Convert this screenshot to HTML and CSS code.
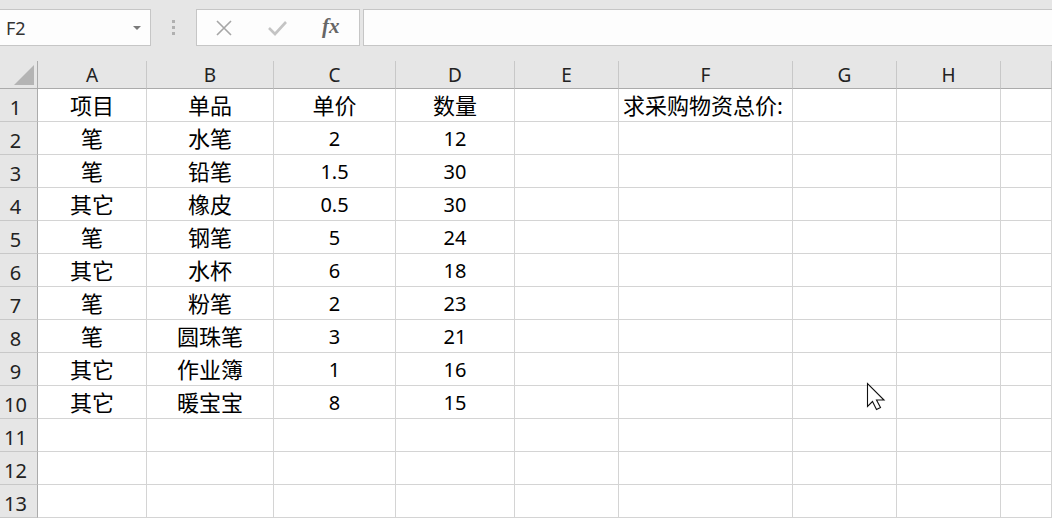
FILE: index.html
```html
<!DOCTYPE html>
<html>
<head>
<meta charset="utf-8">
<link rel="stylesheet" href="styles.css">
</head>
<body>
<div class="app">
  <div class="toolbar">
    <div class="namebox">
      <span class="name">F2</span>
      <span class="dd"></span>
    </div>
    <div class="grip"><i></i><i></i><i></i></div>
    <div class="fxbtns">
      <svg class="ico" width="22" height="22" viewBox="0 0 22 22"><path d="M4 4 L18 18 M18 4 L4 18" stroke="#a6a6a6" stroke-width="1.6" fill="none"/></svg>
      <svg class="ico" width="22" height="22" viewBox="0 0 22 22"><path d="M3 11 L9 17 L20 5" stroke="#c4c4c4" stroke-width="2.6" fill="none"/></svg>
      <span class="fx">fx</span>
    </div>
    <div class="formula"></div>
  </div>
  <div class="sheet">
    <div class="corner"><span class="tri"></span></div>
    <div class="ch">A</div><div class="ch">B</div><div class="ch">C</div><div class="ch">D</div><div class="ch">E</div><div class="ch">F</div><div class="ch">G</div><div class="ch">H</div><div class="ch"></div>

    <div class="rh">1</div><div class="c z">项目</div><div class="c z">单品</div><div class="c z">单价</div><div class="c z">数量</div><div class="c"></div><div class="c z l">求采购物资总价:</div><div class="c"></div><div class="c"></div><div class="c"></div>
    <div class="rh">2</div><div class="c z">笔</div><div class="c z">水笔</div><div class="c">2</div><div class="c">12</div><div class="c"></div><div class="c"></div><div class="c"></div><div class="c"></div><div class="c"></div>
    <div class="rh">3</div><div class="c z">笔</div><div class="c z">铅笔</div><div class="c">1.5</div><div class="c">30</div><div class="c"></div><div class="c"></div><div class="c"></div><div class="c"></div><div class="c"></div>
    <div class="rh">4</div><div class="c z">其它</div><div class="c z">橡皮</div><div class="c">0.5</div><div class="c">30</div><div class="c"></div><div class="c"></div><div class="c"></div><div class="c"></div><div class="c"></div>
    <div class="rh">5</div><div class="c z">笔</div><div class="c z">钢笔</div><div class="c">5</div><div class="c">24</div><div class="c"></div><div class="c"></div><div class="c"></div><div class="c"></div><div class="c"></div>
    <div class="rh">6</div><div class="c z">其它</div><div class="c z">水杯</div><div class="c">6</div><div class="c">18</div><div class="c"></div><div class="c"></div><div class="c"></div><div class="c"></div><div class="c"></div>
    <div class="rh">7</div><div class="c z">笔</div><div class="c z">粉笔</div><div class="c">2</div><div class="c">23</div><div class="c"></div><div class="c"></div><div class="c"></div><div class="c"></div><div class="c"></div>
    <div class="rh">8</div><div class="c z">笔</div><div class="c z">圆珠笔</div><div class="c">3</div><div class="c">21</div><div class="c"></div><div class="c"></div><div class="c"></div><div class="c"></div><div class="c"></div>
    <div class="rh">9</div><div class="c z">其它</div><div class="c z">作业簿</div><div class="c">1</div><div class="c">16</div><div class="c"></div><div class="c"></div><div class="c"></div><div class="c"></div><div class="c"></div>
    <div class="rh">10</div><div class="c z">其它</div><div class="c z">暖宝宝</div><div class="c">8</div><div class="c">15</div><div class="c"></div><div class="c"></div><div class="c"></div><div class="c"></div><div class="c"></div>
    <div class="rh">11</div><div class="c"></div><div class="c"></div><div class="c"></div><div class="c"></div><div class="c"></div><div class="c"></div><div class="c"></div><div class="c"></div><div class="c"></div>
    <div class="rh">12</div><div class="c"></div><div class="c"></div><div class="c"></div><div class="c"></div><div class="c"></div><div class="c"></div><div class="c"></div><div class="c"></div><div class="c"></div>
    <div class="rh">13</div><div class="c"></div><div class="c"></div><div class="c"></div><div class="c"></div><div class="c"></div><div class="c"></div><div class="c"></div><div class="c"></div><div class="c"></div>
  </div>
  <svg class="cursor" width="22" height="30" viewBox="0 0 22 30"><path d="M1.5 1.5 V24.5 L6.5 19.5 L10.5 27.5 L14.5 25.5 L10.5 18 H18 Z" fill="#fff" stroke="#111" stroke-width="1.1" stroke-linejoin="miter"/></svg>
</div>
</body>
</html>
```
FILE: styles.css
```css
html, body {
  margin: 0;
  padding: 0;
  background: #ffffff;
}
.app {
  position: relative;
  width: 1052px;
  height: 518px;
  overflow: hidden;
  font-family: "Noto Sans", "Noto Sans CJK SC", sans-serif;
}
.toolbar {
  height: 61px;
  background: #e6e6e6;
  display: flex;
  align-items: flex-start;
  padding-top: 9px;
  box-sizing: border-box;
}
.namebox {
  width: 151px;
  height: 37px;
  box-sizing: border-box;
  background: #fdfdfd;
  border: 1px solid #c6c6c6;
  border-left: none;
  display: flex;
  align-items: center;
  justify-content: space-between;
  padding: 0 9px 0 6px;
}
.name {
  font-size: 18px;
  color: #333;
  font-family: "Noto Sans", sans-serif;
}
.dd {
  width: 0;
  height: 0;
  border-left: 4px solid transparent;
  border-right: 4px solid transparent;
  border-top: 4px solid #7a7a7a;
}
.grip {
  width: 45px;
  height: 37px;
  display: flex;
  flex-direction: column;
  align-items: center;
  justify-content: center;
  gap: 3px;
}
.grip i {
  display: block;
  width: 3px;
  height: 3px;
  background: #b0b0b0;
}
.fxbtns {
  width: 164px;
  height: 37px;
  box-sizing: border-box;
  background: #fdfdfd;
  border: 1px solid #c6c6c6;
  display: flex;
  align-items: center;
  padding-left: 16px;
  gap: 31px;
}
.fx {
  font-family: "Liberation Serif", serif;
  font-style: italic;
  font-weight: bold;
  font-size: 21px;
  color: #666;
  margin-left: 3px;
  margin-top: -2px;
}
.formula {
  flex: 1;
  margin-left: 3px;
  height: 37px;
  box-sizing: border-box;
  background: #fdfdfd;
  border: 1px solid #c6c6c6;
  border-right: none;
}
.sheet {
  display: grid;
  grid-template-columns: 38px 109px 127px 122px 119px 104px 174px 104px 104px 1fr;
  grid-template-rows: 28px repeat(13, 33px);
}
.sheet > div {
  box-sizing: border-box;
  display: flex;
  align-items: center;
  justify-content: center;
  font-size: 20px;
  color: #000;
}
.corner {
  background: #e6e6e6;
  border-right: 1px solid #ababab;
  border-bottom: 1px solid #ababab;
  position: relative;
}
.tri {
  position: absolute;
  right: 3px;
  bottom: 3px;
  width: 0;
  height: 0;
  border-left: 20px solid transparent;
  border-bottom: 20px solid #b4b4b4;
}
.ch {
  background: #e6e6e6;
  border-right: 1px solid #c8c8c8;
  border-bottom: 1px solid #ababab;
  color: #222 !important;
  font-size: 19px !important;
  padding-top: 1px;
}
.rh {
  background: #e6e6e6;
  border-right: 1px solid #ababab;
  border-bottom: 1px solid #c8c8c8;
  padding-right: 6px;
  padding-top: 4px;
  color: #222 !important;
}
.c {
  border-right: 1px solid #d4d4d4;
  border-bottom: 1px solid #d4d4d4;
}
.sheet > .z {
  font-size: 22px;
  padding-bottom: 3px;
}
.sheet > .l {
  justify-content: flex-start;
  padding-left: 4px;
}
.cursor {
  position: absolute;
  left: 866px;
  top: 382px;
}
```
